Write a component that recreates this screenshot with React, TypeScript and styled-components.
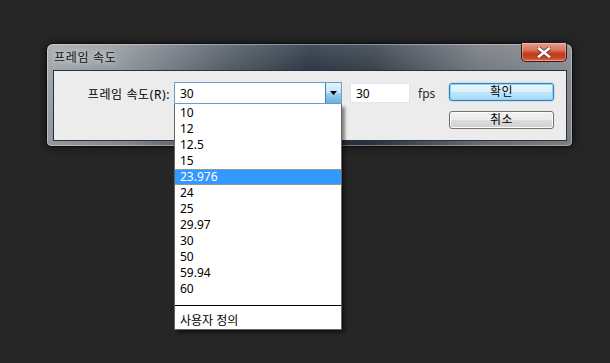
import React, { useState } from 'react';
import styled, { createGlobalStyle } from 'styled-components';

// ============================================================
// GLOBAL
// ============================================================

const GlobalStyle = createGlobalStyle`
  html, body {
    margin: 0;
    padding: 0;
    background: #262626;
  }
  body {
    font-family: "Noto Sans", "Noto Sans CJK KR", sans-serif;
    font-size: 12px;
    color: #000;
  }
`;

// ============================================================
// STYLED COMPONENTS
// ============================================================

const Page = styled.div`
  width: 610px;
  height: 363px;
  padding: 43px 0 0 46px;
  box-sizing: border-box;
  background: #262626;
  overflow: hidden;
`;

const Window = styled.div`
  width: 527px;
  box-sizing: border-box;
  padding: 0 5px 5px 6px;
  border-radius: 7px 7px 5px 5px;
  border: 1px solid #0e0e0e;
  background:
    linear-gradient(180deg, rgba(255, 255, 255, 0.18) 0%, rgba(255, 255, 255, 0.05) 30%, rgba(0, 0, 0, 0.05) 100%),
    linear-gradient(90deg, #9aa0a5 0%, #8a9096 14%, #46505b 35%, #1f2a37 50%, #2a3440 62%, #6a7077 82%, #80858a 100%);
  box-shadow: inset 0 0 0 1px rgba(255, 255, 255, 0.35), 0 0 8px rgba(0, 0, 0, 0.6);
`;

const TitleBar = styled.div`
  display: flex;
  align-items: flex-start;
  justify-content: space-between;
  height: 26px;
`;

const TitleText = styled.div`
  padding: 4px 0 0 1px;
  font-size: 12px;
  letter-spacing: 0.7px;
  color: #111;
  text-shadow: 0 0 6px rgba(230, 232, 235, 0.9), 0 0 10px rgba(230, 232, 235, 0.9);
`;

const CloseButton = styled.div`
  display: flex;
  align-items: center;
  justify-content: center;
  width: 46px;
  height: 19px;
  margin-top: -1px;
  box-sizing: border-box;
  border: 1px solid #3a1a14;
  border-top: none;
  border-radius: 0 0 5px 5px;
  background: linear-gradient(180deg, #e8a08e 0%, #d7715a 40%, #c2381c 60%, #c8472a 85%, #e07b5c 100%);
  box-shadow: inset 0 0 0 1px rgba(255, 255, 255, 0.3);
`;

const Client = styled.div`
  display: flex;
  align-items: flex-start;
  height: 71px;
  box-sizing: border-box;
  padding: 11px 12px 0 0;
  background: #ececec;
  border: 1px solid #2e3236;
`;

const Label = styled.div`
  width: 116px;
  margin-right: 4px;
  padding-top: 3px;
  text-align: right;
  white-space: nowrap;
  letter-spacing: 0.6px;
  color: #000;
`;

const ComboWrap = styled.div`
  position: relative;
  width: 168px;
  height: 22px;
`;

const ComboBox = styled.div`
  display: flex;
  height: 100%;
  box-sizing: border-box;
  border: 1px solid #6c9ccd;
  background: #fff;
`;

const ComboText = styled.div`
  flex: 1;
  padding: 2px 0 0 5px;
`;

const ComboArrow = styled.div`
  display: flex;
  align-items: center;
  justify-content: center;
  width: 16px;
  box-sizing: border-box;
  border-left: 1px solid #3c7fb1;
  background: linear-gradient(180deg, #e5f4fc 0%, #c4e5f6 50%, #98d1ef 51%, #68b3db 100%);
`;

const DropList = styled.div`
  position: absolute;
  top: 22px;
  left: 0;
  width: 168px;
  box-sizing: border-box;
  padding-top: 1px;
  border: 1px solid #646464;
  border-top: none;
  background: #fff;
  box-shadow: 3px 3px 3px rgba(0, 0, 0, 0.45);
  z-index: 10;
`;

const DropItem = styled.div<{ $selected?: boolean }>`
  height: 16px;
  line-height: 14px;
  box-sizing: border-box;
  padding-left: 5px;
  color: ${({ $selected }) => ($selected ? '#fff' : '#000')};
  background: ${({ $selected }) => ($selected ? '#3399ff' : 'transparent')};
  border-top: 1px dotted ${({ $selected }) => ($selected ? '#e39a3a' : 'transparent')};
  border-bottom: 1px dotted ${({ $selected }) => ($selected ? '#e39a3a' : 'transparent')};
`;

const Separator = styled.div`
  height: 16px;
  display: flex;
  align-items: center;

  &::after {
    content: '';
    flex: 1;
    height: 1px;
    background: #000;
  }
`;

const NumInput = styled.div`
  width: 60px;
  height: 20px;
  margin: 1px 0 0 8px;
  box-sizing: border-box;
  padding: 1px 0 0 5px;
  border: 1px solid #e1e6ec;
  background: #fff;
`;

const Unit = styled.div`
  margin-left: 8px;
  padding-top: 3px;
  color: #2a2a2a;
`;

const ButtonColumn = styled.div`
  display: flex;
  flex-direction: column;
  gap: 10px;
  margin-left: auto;
  padding-top: 1px;
`;

const DialogButton = styled.div<{ $primary?: boolean }>`
  display: flex;
  align-items: center;
  justify-content: center;
  width: 105px;
  height: 18px;
  box-sizing: border-box;
  border-radius: 3px;
  border: 1px solid ${({ $primary }) => ($primary ? '#3c7fb1' : '#707070')};
  background: ${({ $primary }) =>
    $primary
      ? 'linear-gradient(180deg, #eaf6fd 0%, #d9f0fc 50%, #bee6fd 51%, #a7d9f5 100%)'
      : 'linear-gradient(180deg, #f2f2f2 0%, #ebebeb 50%, #dddddd 51%, #cfcfcf 100%)'};
  box-shadow: ${({ $primary }) =>
    $primary ? 'inset 0 0 0 1px #8fd3f5, 0 0 2px #5fb8ea' : 'inset 0 0 0 1px #fcfcfc'};
  font-size: 12px;
  letter-spacing: 0.5px;
  line-height: 1;
`;

// ============================================================
// COMPONENT
// ============================================================

const RATES = ['10', '12', '12.5', '15', '23.976', '24', '25', '29.97', '30', '50', '59.94', '60'];

export default function App() {
  const [selected] = useState('23.976');

  return (
    <>
      <GlobalStyle />
      <Page>
        <Window>
          <TitleBar>
            <TitleText>프레임 속도</TitleText>
            <CloseButton>
              <svg width="14" height="11" viewBox="0 0 14 11">
                <path d="M2 1.5 L12 9.5 M12 1.5 L2 9.5" stroke="#5a2a20" strokeWidth="4" strokeLinecap="square" />
                <path d="M2 1.5 L12 9.5 M12 1.5 L2 9.5" stroke="#fff" strokeWidth="2.6" strokeLinecap="square" />
              </svg>
            </CloseButton>
          </TitleBar>

          <Client>
            <Label>프레임 속도(R):</Label>
            <ComboWrap>
              <ComboBox>
                <ComboText>30</ComboText>
                <ComboArrow>
                  <svg width="7" height="4" viewBox="0 0 7 4">
                    <path d="M0 0 H7 L3.5 4 Z" fill="#000" />
                  </svg>
                </ComboArrow>
              </ComboBox>
              <DropList>
                {RATES.map((r) => (
                  <DropItem key={r} $selected={r === selected}>
                    {r}
                  </DropItem>
                ))}
                <Separator />
                <DropItem>사용자 정의</DropItem>
              </DropList>
            </ComboWrap>
            <NumInput>30</NumInput>
            <Unit>fps</Unit>
            <ButtonColumn>
              <DialogButton $primary>확인</DialogButton>
              <DialogButton>취소</DialogButton>
            </ButtonColumn>
          </Client>
        </Window>
      </Page>
    </>
  );
}
